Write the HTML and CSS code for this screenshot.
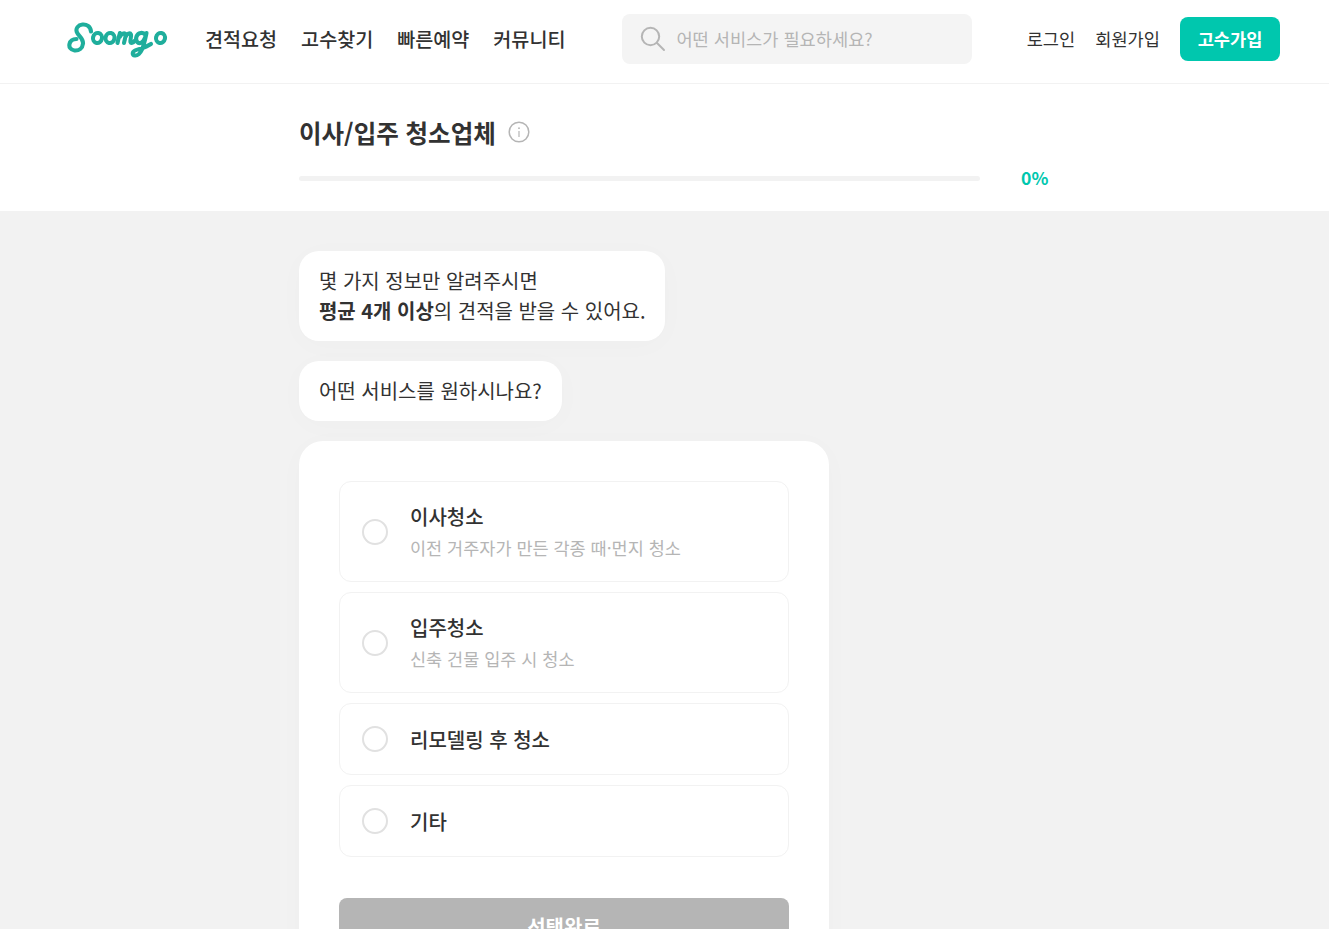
FILE: index.html
```html
<!DOCTYPE html>
<html lang="ko">
<head>
<meta charset="utf-8">
<title>숨고</title>
<link rel="stylesheet" href="styles.css">
</head>
<body>
<header class="header">
  <svg class="logo" viewBox="0 0 102 36" role="img" aria-label="Soomgo">
    <g fill="none" stroke="#1fae9c" stroke-width="4.100" stroke-linecap="round" stroke-linejoin="round">
      <path d="M24 9.500C23.500 4.500 19.500 2 15.500 2.500 11 3 8.500 6.500 9.800 10 11.200 14 16.500 16 16 21.500 15.500 26 12 29 7.500 28.500 3.500 28 1.800 25 2.500 22 3.200 18.800 6 17 9.500 17"/>
      <ellipse cx="30.500" cy="16" rx="4.500" ry="5" transform="rotate(12 30.500 16)"/>
      <ellipse cx="43" cy="16" rx="4.500" ry="5" transform="rotate(12 43 16)"/>
      <path d="M50.500 21C51.200 17.500 52 14 53 11M53 14.500C54.500 11.500 57.500 10.300 58.500 12.500 59 14.500 57.500 18 57 21M58.500 15C60 11.500 63 10.300 64 12.500 64.500 14.500 63 18 63.500 20 64 21.500 66 21 67.500 19"/>
      <path d="M78.500 13C76 9.500 71 10.500 69.500 14.500 68 19 71 22.500 74.500 20.500 77 19 78.500 15 79.500 11M79.500 11C78.200 17 77 23 75 27.500 73.500 31 70.500 33.800 68 33.500 65 33 65 30 68 28.500 71.500 26.800 78 26 84 22"/>
      <ellipse cx="93.500" cy="16" rx="4.500" ry="5" transform="rotate(12 93.500 16)"/>
    </g>
  </svg>
  <nav class="nav">
    <a class="nav-link">견적요청</a>
    <a class="nav-link">고수찾기</a>
    <a class="nav-link">빠른예약</a>
    <a class="nav-link">커뮤니티</a>
  </nav>
  <div class="search">
    <svg class="search-icon" viewBox="0 0 26 26" aria-hidden="true">
      <circle cx="10.500" cy="10.500" r="8.700" fill="none" stroke="#b5b5b5" stroke-width="2"/>
      <path d="M17 17l7 7" fill="none" stroke="#b5b5b5" stroke-width="2" stroke-linecap="round"/>
    </svg>
    <span class="search-text">어떤 서비스가 필요하세요?</span>
  </div>
  <div class="auth">
    <a class="auth-link">로그인</a>
    <a class="auth-link">회원가입</a>
    <a class="pro-btn">고수가입</a>
  </div>
</header>
<section class="top">
  <div class="title-row">
    <h1 class="title">이사/입주 청소업체</h1>
    <svg class="info" viewBox="0 0 22 22" aria-hidden="true">
      <circle cx="11" cy="11" r="9.800" fill="none" stroke="#b5b5b5" stroke-width="1.500"/>
      <circle cx="11" cy="7.200" r=".9" fill="#b5b5b5"/>
      <path d="M11 10v6" stroke="#b5b5b5" stroke-width="1.200" fill="none"/>
    </svg>
  </div>
  <div class="progress-row">
    <div class="progress"></div>
    <span class="percent">0%</span>
  </div>
</section>
<main class="main">
  <div class="bubble">몇 가지 정보만 알려주시면<br><b>평균 4개 이상</b>의 견적을 받을 수 있어요.</div>
  <div class="bubble">어떤 서비스를 원하시나요?</div>
  <div class="card">
    <label class="option">
      <span class="radio"></span>
      <span class="opt-body"><span class="opt-title">이사청소</span><span class="opt-sub">이전 거주자가 만든 각종 때·먼지 청소</span></span>
    </label>
    <label class="option">
      <span class="radio"></span>
      <span class="opt-body"><span class="opt-title">입주청소</span><span class="opt-sub">신축 건물 입주 시 청소</span></span>
    </label>
    <label class="option">
      <span class="radio"></span>
      <span class="opt-body"><span class="opt-title">리모델링 후 청소</span></span>
    </label>
    <label class="option">
      <span class="radio"></span>
      <span class="opt-body"><span class="opt-title">기타</span></span>
    </label>
    <button class="submit">선택완료</button>
  </div>
</main>
</body>
</html>
```
FILE: styles.css
```css
* { box-sizing: border-box; }
html, body { margin: 0; height: 929px; overflow: hidden; }
body { font-family: "Noto Sans CJK KR", "Noto Sans", sans-serif; color: #323232; background: #f2f2f2; }
.header { display: flex; align-items: center; height: 84px; padding: 0 49px 5px 67px; background: #fff; border-bottom: 1px solid #f2f2f2; }
.logo { width: 102px; height: 36px; flex: none; margin-top: 2px; }
.nav { display: flex; gap: 24px; margin-left: 36px; }
.nav-link { font-size: 19.600px; font-weight: 500; line-height: 28px; }
.search { display: flex; align-items: center; width: 350px; height: 50px; margin-left: 57px; padding-left: 18px; background: #f4f4f4; border-radius: 8px; }
.search-icon { width: 26px; height: 26px; flex: none; }
.search-text { margin: -2px 0 0 10px; font-size: 17.600px; color: #b5b5b5; }
.auth { display: flex; align-items: center; margin-left: auto; }
.auth-link { margin-right: 20px; font-size: 17.600px; line-height: 24px; }
.pro-btn { width: 100px; height: 44px; line-height: 44px; text-align: center; font-size: 17.600px; font-weight: 700; color: #fff; background: #00c7ae; border-radius: 8px; }
.top { height: 127px; padding: 30px 0 0 299px; background: #fff; }
.title-row { display: flex; align-items: center; height: 36px; }
.title { margin: 2px 0 0; font-size: 24.500px; font-weight: 700; line-height: 34px; }
.info { width: 22px; height: 22px; margin-left: 12px; }
.progress-row { display: flex; align-items: center; margin-top: 15px; }
.progress { width: 681px; height: 5px; border-radius: 3px; background: #f2f2f2; }
.percent { margin: -1px 0 1px 41px; font-size: 17.600px; font-weight: 700; line-height: 27px; color: #00c7ae; }
.main { display: flex; flex-direction: column; align-items: flex-start; gap: 20px; padding: 40px 0 0 299px; }
.bubble { padding: 15px 20px; font-size: 19.980px; line-height: 30px; background: #fff; border-radius: 20px; box-shadow: 0 4px 30px rgba(0,0,0,.02); }
.bubble b { font-weight: 700; }
.card { display: flex; flex-direction: column; gap: 10px; width: 530px; padding: 40px; background: #fff; border-radius: 24px; box-shadow: 0 4px 30px rgba(0,0,0,.02); }
.option { display: flex; align-items: center; padding: 19px 22px; min-height: 72px; background: #fff; border: 1px solid #f2f2f2; border-radius: 12px; }
.radio { width: 26px; height: 26px; flex: none; border: 2px solid #e1e1e1; border-radius: 50%; }
.opt-body { display: flex; flex-direction: column; margin: 1px 0 0 22px; }
.opt-title { font-size: 20px; font-weight: 500; line-height: 30px; }
.opt-sub { margin-top: 1px; font-size: 17.500px; line-height: 29px; color: #b5b5b5; }
.submit { display: block; width: 100%; height: 56px; margin-top: 31px; padding: 0; border: 0; border-radius: 8px; background: #b5b5b5; color: #fff; font: 700 20px "Noto Sans CJK KR", sans-serif; }
```
